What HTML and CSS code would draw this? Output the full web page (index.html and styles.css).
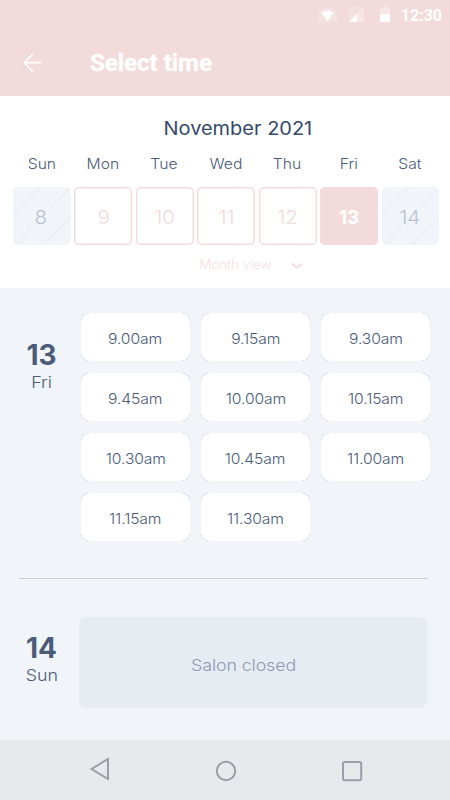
FILE: index.html
```html
<!DOCTYPE html>
<html lang="en">
<head>
<meta charset="utf-8">
<title>Select time</title>
<link rel="stylesheet" href="styles.css">
</head>
<body>
<header class="header">
  <div class="status">
    <svg class="wifi" width="19" height="16" viewBox="0 0 19 16"><path d="M0 4Q9.5-3 19 4V15H0Z" fill="#fff" opacity=".2"/><path d="M3.500 5.500Q9.500 1.500 15.500 5.500L9.500 14.500Z" fill="#fff"/></svg>
    <svg class="signal" width="15" height="15" viewBox="0 0 15 15"><path d="M15 0V15H0Z" fill="#fff" opacity=".2"/><path d="M0 0H15V15H0Z" fill="#fff" opacity=".15"/><path d="M0 15L8 7V15Z" fill="#fff"/></svg>
    <svg class="battery" width="10" height="16" viewBox="0 0 10 16"><path d="M0 2H2.500V0H7.500V2H10V8H0Z" fill="#fff" opacity=".3"/><path d="M0 8H10V16H0Z" fill="#fff"/></svg>
    <span class="clock">12:30</span>
  </div>
  <div class="appbar">
    <svg class="back" width="20" height="20" viewBox="0 0 20 20" fill="none" stroke-width="1.800"><path d="M10.500 .8L1.300 9.500L10.500 18.800" stroke="#d8c9cb" transform="translate(-.4 .3)"/><path d="M10.800 .8L1.800 9.700L10.800 18.800M1.800 9.700H19" stroke="#fff"/></svg>
    <h1 class="title">Select time</h1>
  </div>
</header>

<section class="calendar">
  <h2 class="month"><span class="wide">November 2021</span></h2>
  <div class="week names">
    <span class="wide">Sun</span><span class="wide">Mon</span><span class="wide">Tue</span><span class="wide">Wed</span><span class="wide">Thu</span><span class="wide">Fri</span><span class="wide">Sat</span>
  </div>
  <div class="week days">
    <div class="day off"><svg class="hatch" viewBox="0 0 58 58"><path d="M0 28L28 0M37 21L58 0M1 58L19 40M30 58L58 30"/></svg><span class="wide">8</span></div>
    <div class="day"><span class="wide">9</span></div>
    <div class="day"><span class="wide">10</span></div>
    <div class="day"><span class="wide">11</span></div>
    <div class="day"><span class="wide">12</span></div>
    <div class="day selected"><span>13</span></div>
    <div class="day off"><svg class="hatch" viewBox="0 0 58 58"><path d="M0 28L28 0M37 21L58 0M1 58L19 40M30 58L58 30"/></svg><span class="wide">14</span></div>
  </div>
  <div class="view"><span class="wide">Month view</span><svg width="12" height="7" viewBox="0 0 12 7"><path d="M1 1.500L5 5Q6 5.600 7 5L11 1.500" fill="none" stroke="#f3dadb" stroke-width="1.800"/></svg></div>
</section>

<main class="schedule">
  <section class="entry open">
    <div class="date"><strong>13</strong><span class="wide">Fri</span></div>
    <div class="slots">
      <div class="slot"><span class="wide">9.00am</span></div><div class="slot"><span class="wide">9.15am</span></div><div class="slot"><span class="wide">9.30am</span></div>
      <div class="slot"><span class="wide">9.45am</span></div><div class="slot"><span class="wide">10.00am</span></div><div class="slot"><span class="wide">10.15am</span></div>
      <div class="slot"><span class="wide">10.30am</span></div><div class="slot"><span class="wide">10.45am</span></div><div class="slot"><span class="wide">11.00am</span></div>
      <div class="slot"><span class="wide">11.15am</span></div><div class="slot"><span class="wide">11.30am</span></div>
    </div>
  </section>
  <hr class="rule">
  <section class="entry shut">
    <div class="date"><strong>14</strong><span class="wide">Sun</span></div>
    <div class="closed"><span class="wide">Salon closed</span></div>
  </section>
</main>

<nav class="nav">
  <svg class="triangle" width="22" height="24" viewBox="0 0 22 24"><path d="M2.500 12L19 2V22Z"/></svg>
  <svg width="22" height="22" viewBox="0 0 22 22"><circle cx="11" cy="11" r="9.200"/></svg>
  <svg width="22" height="22" viewBox="0 0 22 22"><rect x="2" y="2" width="18.200" height="18.200" rx="1.800"/></svg>
</nav>
</body>
</html>
```
FILE: styles.css
```css
* { box-sizing: border-box; }
body { margin: 0; width: 450px; height: 800px; overflow: hidden; display: flex; flex-direction: column; background: #f1f5fa; color: #4a5a77; font-family: Inter, "Noto Sans", sans-serif; font-weight: 300; }
h1, h2, hr { margin: 0; }
.wide { display: inline-block; transform: scaleX(1.08); }

.header { height: 96px; background: #f3dbdb; color: #fff; font-family: Roboto, sans-serif; }
.status { display: flex; height: 30px; padding: 7px 8px 0 0; justify-content: flex-end; align-items: flex-start; }
.wifi { margin-right: 12px; }
.signal { margin-right: 16px; }
.battery { margin: -1px 11px 0 0; }
.clock { font-size: 16px; font-weight: 700; line-height: 17px; }
.appbar { display: flex; align-items: center; height: 66px; padding-left: 22px; }
.back { margin: -1px 48px 0 0; }
.title { font-size: 24px; font-weight: 700; line-height: 66px; -webkit-text-stroke: .3px #fff; }

.calendar { height: 192px; padding: 0 10.500px 0 13px; background: #fff; }
.month { margin-left: 24px; padding-top: 20px; text-align: center; color: #34486a; font-size: 18.500px; font-weight: 400; line-height: 25px; }
.week { display: grid; grid-template-columns: repeat(7, 1fr); gap: 3.600px; }
.names { margin-top: 13px; text-align: center; font-size: 14.500px; line-height: 20px; }
.names .wide { position: relative; left: -.5px; }
.days { margin-top: 13px; }
.day { position: relative; display: flex; justify-content: center; align-items: center; height: 58px; padding-top: 3px; border-radius: 5px; box-shadow: inset 0 0 0 1.500px #f5dcdc; color: #f3dadb; font-size: 19px; }
.selected { background: #f3dbdb; color: #fff; font-weight: 700; }
.off { background: #f1f5fa; box-shadow: none; color: #b9c1d0; overflow: hidden; }
.off span { position: relative; left: -1px; }
.hatch { position: absolute; left: 0; top: 0; width: 58px; height: 58px; fill: none; stroke: #ebeff4; stroke-width: 1.800; }
.view { display: flex; justify-content: flex-end; align-items: center; gap: 22px; margin-top: 11px; padding-right: 137px; color: #f5dfdf; font-size: 12.500px; line-height: 18px; letter-spacing: -.1px; }

.schedule { height: 452px; }
.entry { display: flex; }
.open { height: 290px; padding: 25px 20px 0 0; }
.date { width: 81px; padding: 25px 0 0 2px; display: flex; flex-direction: column; align-items: center; }
.date strong { font-size: 28px; font-weight: 700; line-height: 34px; color: #4b5c78; }
.date span { font-size: 16.500px; line-height: 20px; }
.slots { flex: 1; display: grid; grid-template-columns: repeat(3, 1fr); grid-auto-rows: 48px; gap: 12px 11px; }
.slot {
  border-radius: 8px;
  text-align: center;
  font-size: 14.500px;
  line-height: 51px;
  letter-spacing: -.1px;
  background:
    radial-gradient(circle at 100% 100%, #fff 7px, #cdd1d6 8px) 0 0 / 8px 8px no-repeat,
    radial-gradient(circle at 0 100%, #fff 7px, #cdd1d6 8px) 100% 0 / 8px 8px no-repeat,
    radial-gradient(circle at 100% 0, #fff 7px, #cdd1d6 8px) 0 100% / 8px 8px no-repeat,
    radial-gradient(circle at 0 0, #fff 7px, #cdd1d6 8px) 100% 100% / 8px 8px no-repeat,
    #fff;
}
.rule { height: 1px; margin: 0 22px .5px 19px; border: 0; background: #cbd0d8; }
.shut { padding: 37px 23px 0 0; }
.shut .date { width: 79px; padding: 14px 0 0 4px; }
.closed { flex: 1; height: 91px; padding: 4px 18px 0 0; text-align: center; border-radius: 7px; background: #e7ebf2; color: #8c9ab4; font-size: 16.500px; line-height: 88px; letter-spacing: -.1px; }

.nav { height: 60px; padding: 1px 87px 0 88px; display: flex; align-items: center; justify-content: space-between; background: #e6eaed; }
.nav svg { fill: none; stroke: #999fa8; stroke-width: 2; }
.nav .triangle { margin: -4px -1px 0 1px; }
```
